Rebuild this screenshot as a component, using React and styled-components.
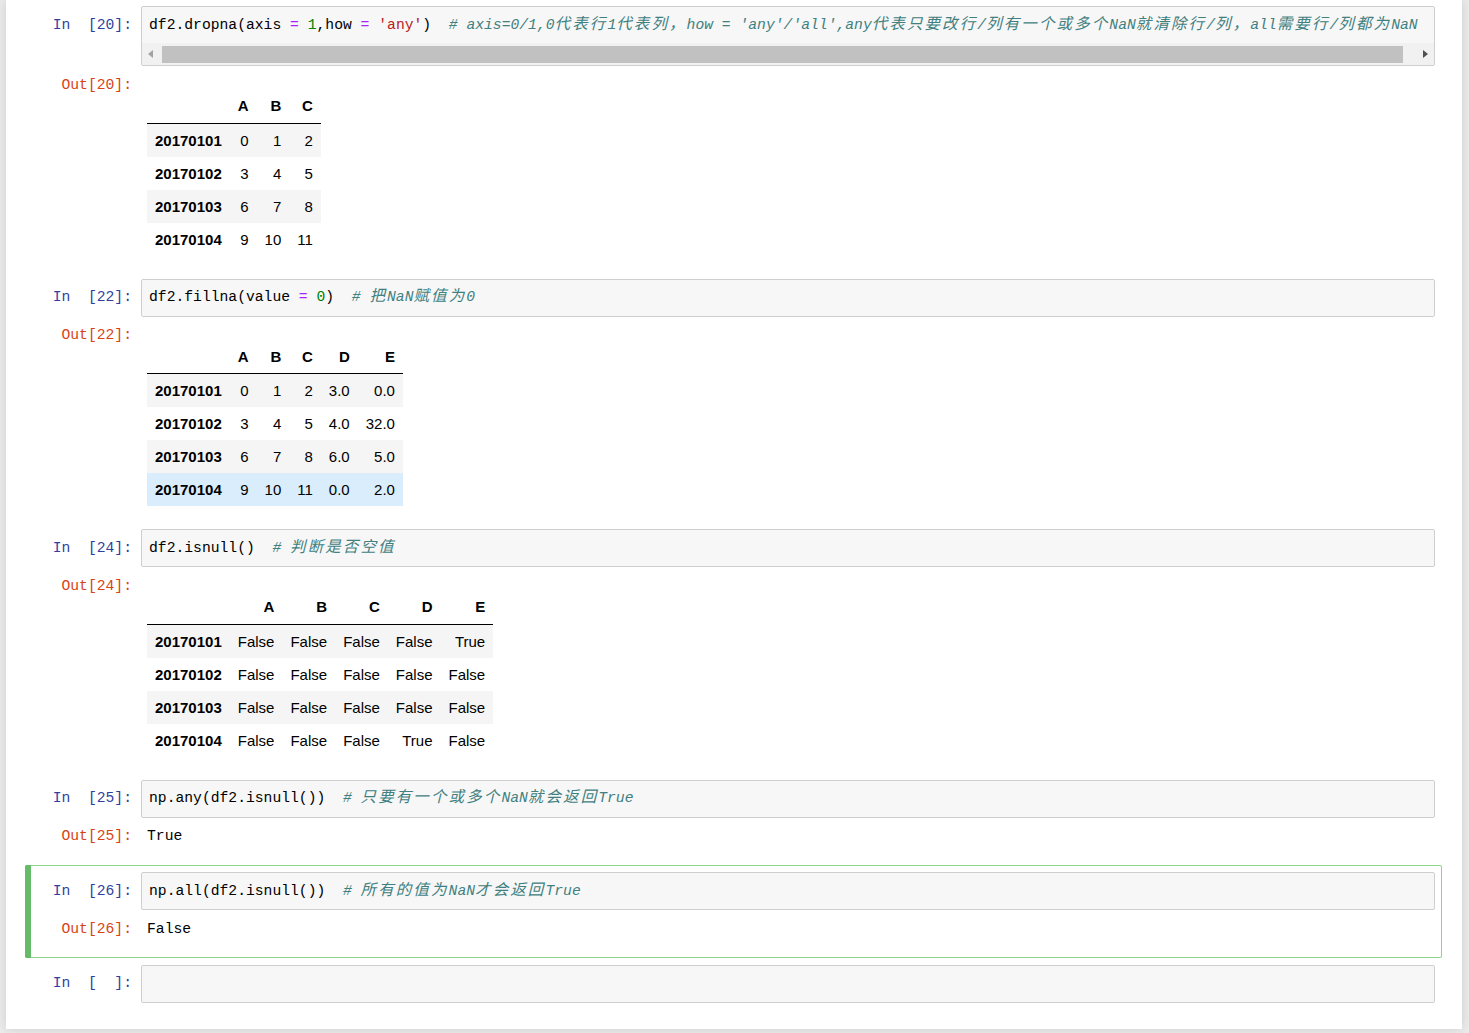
import styled, { createGlobalStyle } from 'styled-components';

const GlobalStyle = createGlobalStyle`
  html, body {
    margin: 0;
    padding: 0;
    background: #eeeeee;
  }
`;

const MONO = `"Liberation Mono", "Noto Sans CJK SC", monospace`;

const splitHan = (text) =>
  text.split(/([\u3000-\u9fff\uff00-\uffef]+)/).map((part, i) =>
    /[\u3000-\u9fff\uff00-\uffef]/.test(part) ? <Han key={i}>{part}</Han> : part
  );

const tables = {
  t20: {
    cols: ['A', 'B', 'C'],
    rows: [
      ['20170101', ['0', '1', '2']],
      ['20170102', ['3', '4', '5']],
      ['20170103', ['6', '7', '8']],
      ['20170104', ['9', '10', '11']],
    ],
  },
  t22: {
    cols: ['A', 'B', 'C', 'D', 'E'],
    hover: 3,
    rows: [
      ['20170101', ['0', '1', '2', '3.0', '0.0']],
      ['20170102', ['3', '4', '5', '4.0', '32.0']],
      ['20170103', ['6', '7', '8', '6.0', '5.0']],
      ['20170104', ['9', '10', '11', '0.0', '2.0']],
    ],
  },
  t24: {
    cols: ['A', 'B', 'C', 'D', 'E'],
    rows: [
      ['20170101', ['False', 'False', 'False', 'False', 'True']],
      ['20170102', ['False', 'False', 'False', 'False', 'False']],
      ['20170103', ['False', 'False', 'False', 'False', 'False']],
      ['20170104', ['False', 'False', 'False', 'True', 'False']],
    ],
  },
};

const DataFrame = ({ data }) => (
  <Frame>
    <thead>
      <tr>
        <HeadCell />
        {data.cols.map((c) => (
          <HeadCell key={c}>{c}</HeadCell>
        ))}
      </tr>
    </thead>
    <tbody>
      {data.rows.map(([idx, vals], r) => (
        <Row key={idx} $hover={data.hover === r}>
          <IndexCell>{idx}</IndexCell>
          {vals.map((v, i) => (
            <Cell key={i}>{v}</Cell>
          ))}
        </Row>
      ))}
    </tbody>
  </Frame>
);

const NbCell = ({ n, selected, scroll, code, children }) => (
  <CellBox $selected={selected}>
    <InputRow>
      <Prompt $kind="in">{`In\u00a0\u00a0[${n}]:`}</Prompt>
      <InputArea>
        <CodeLine>{code}</CodeLine>
        {scroll && (
          <ScrollBar>
            <ArrowButton>
              <svg width="5" height="8" viewBox="0 0 5 8">
                <polygon points="5,0 5,8 0,4" fill="#a3a3a3" />
              </svg>
            </ArrowButton>
            <Track>
              <Thumb />
            </Track>
            <ArrowButton>
              <svg width="5" height="8" viewBox="0 0 5 8">
                <polygon points="0,0 0,8 5,4" fill="#505050" />
              </svg>
            </ArrowButton>
          </ScrollBar>
        )}
      </InputArea>
    </InputRow>
    {children && (
      <OutputRow>
        <Prompt $kind="out">{`Out[${n}]:`}</Prompt>
        <OutputContent>{children}</OutputContent>
      </OutputRow>
    )}
  </CellBox>
);

export default function App() {
  return (
    <Page>
      <GlobalStyle />
      <Notebook>
        <NbCell
          n="20"
          scroll
          code={
            <>
              df2.dropna(axis <Op>=</Op> <Num>1</Num>,how <Op>=</Op> <Str>'any'</Str>)  <Cmt>{splitHan("# axis=0/1,0代表行1代表列，how = 'any'/'all',any代表只要改行/列有一个或多个NaN就清除行/列，all需要行/列都为NaN")}</Cmt>
            </>
          }
        >
          <DataFrame data={tables.t20} />
        </NbCell>

        <NbCell
          n="22"
          code={
            <>
              df2.fillna(value <Op>=</Op> <Num>0</Num>)  <Cmt>{splitHan('# 把NaN赋值为0')}</Cmt>
            </>
          }
        >
          <DataFrame data={tables.t22} />
        </NbCell>

        <NbCell
          n="24"
          code={
            <>
              df2.isnull()  <Cmt>{splitHan('# 判断是否空值')}</Cmt>
            </>
          }
        >
          <DataFrame data={tables.t24} />
        </NbCell>

        <NbCell
          n="25"
          code={
            <>
              np.any(df2.isnull())  <Cmt>{splitHan('# 只要有一个或多个NaN就会返回True')}</Cmt>
            </>
          }
        >
          <TextOut>True</TextOut>
        </NbCell>

        <NbCell
          n="26"
          selected
          code={
            <>
              np.all(df2.isnull())  <Cmt>{splitHan('# 所有的值为NaN才会返回True')}</Cmt>
            </>
          }
        >
          <TextOut>False</TextOut>
        </NbCell>

        <NbCell n={'\u00a0\u00a0'} code={'\u00a0'} />
      </Notebook>
    </Page>
  );
}

const Page = styled.div`
  background: #eeeeee;
  min-height: 1033px;
  padding-left: 6px;
  overflow: hidden;
`;

const Notebook = styled.div`
  width: 1456px;
  box-sizing: border-box;
  margin-top: -1px;
  padding: 0 20px 19px 19px;
  background: #ffffff;
  box-shadow: 0 0 12px 1px rgba(87, 87, 87, 0.2);
`;

const CellBox = styled.div`
  position: relative;
  border-radius: 2px;
  padding: 7px;
  box-shadow: ${(p) => (p.$selected ? 'inset 0 0 0 1px #8ad48d' : 'none')};

  &::before {
    content: '';
    display: ${(p) => (p.$selected ? 'block' : 'none')};
    position: absolute;
    left: 0;
    top: 0;
    bottom: 0;
    width: 6px;
    background: #66bb6a;
    border-radius: 2px 0 0 2px;
  }
`;

const InputRow = styled.div`
  display: flex;
  align-items: flex-start;
`;

const OutputRow = styled.div`
  display: flex;
  align-items: flex-start;
  margin-top: 8.5px;
  padding-bottom: 9px;
`;

const Prompt = styled.div`
  flex: none;
  width: 109px;
  box-sizing: border-box;
  padding-right: 9px;
  padding-top: ${(p) => (p.$kind === 'in' ? '8.5px' : '0')};
  text-align: right;
  font-family: ${MONO};
  font-size: 14.7px;
  line-height: 21px;
  white-space: pre;
  color: ${(p) => (p.$kind === 'in' ? '#303f9f' : '#d84315')};
`;

const InputArea = styled.div`
  flex: 1;
  min-width: 0;
  overflow: hidden;
  background: #f7f7f7;
  border: 1px solid #cfcfcf;
  border-radius: 2px;
`;

const CodeLine = styled.div`
  padding: 7.5px 7px;
  font-family: ${MONO};
  font-size: 14.7px;
  line-height: 21px;
  white-space: pre;
  overflow: hidden;
  color: #000000;
`;

const Han = styled.span`
  font-family: "Noto Sans CJK SC", sans-serif;
  font-size: 15.5px;
  letter-spacing: 2.1px;
  line-height: 1;
`;

const Op = styled.span`
  color: #aa22ff;
`;

const Num = styled.span`
  color: #008000;
`;

const Str = styled.span`
  color: #ba2121;
`;

const Cmt = styled.span`
  color: #408080;
  font-style: italic;
`;

const ScrollBar = styled.div`
  display: flex;
  align-items: center;
  height: 22px;
  background: #f1f1f1;
`;

const ArrowButton = styled.div`
  flex: none;
  width: 17px;
  height: 17px;
  display: flex;
  align-items: center;
  justify-content: center;
`;

const Track = styled.div`
  flex: 1;
  height: 17px;
  padding: 0 14px 0 3px;
`;

const Thumb = styled.div`
  height: 100%;
  background: #c1c1c1;
`;

const OutputContent = styled.div`
  flex: 1;
  min-width: 0;
  padding-left: 6px;
`;

const TextOut = styled.div`
  font-family: ${MONO};
  font-size: 14.7px;
  line-height: 21px;
  padding-bottom: 2px;
  color: #000000;
  white-space: pre;
`;

const Frame = styled.table`
  margin-top: 14px;
  border-collapse: collapse;
  border-spacing: 0;
  font-family: "Liberation Sans", Arial, sans-serif;
  font-size: 15px;
  color: #000000;

  thead {
    border-bottom: 1px solid #000000;
  }
`;

const HeadCell = styled.th`
  height: 34px;
  padding: 0 8px;
  text-align: right;
  vertical-align: middle;
  font-weight: bold;
  line-height: 17px;
`;

const Row = styled.tr`
  background: ${(p) => (p.$hover ? 'rgba(66, 165, 245, 0.2)' : 'transparent')};

  &:nth-child(odd) {
    background: ${(p) => (p.$hover ? 'rgba(66, 165, 245, 0.2)' : '#f5f5f5')};
  }
`;

const IndexCell = styled.th`
  height: 33px;
  padding: 0 8px;
  text-align: right;
  vertical-align: middle;
  font-weight: bold;
  line-height: 17px;
`;

const Cell = styled.td`
  height: 33px;
  padding: 0 8px;
  text-align: right;
  vertical-align: middle;
  line-height: 17px;
`;
